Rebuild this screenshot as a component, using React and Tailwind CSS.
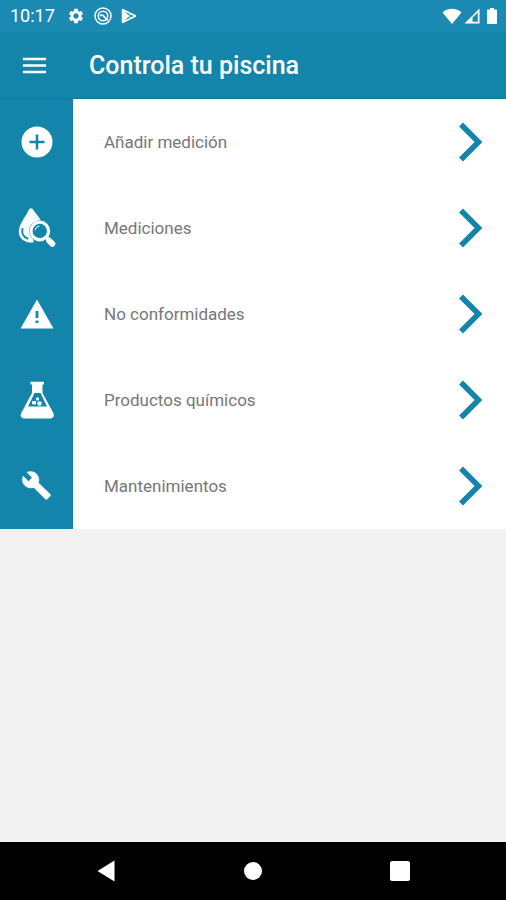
import { MdSettings, MdMenu } from 'react-icons/md';

const AddIcon = () => (
    <svg viewBox="0 0 32 32" className="w-8 h-8">
        <circle cx="16" cy="16" r="15.500" fill="white" />
        <path d="M16 8.500v15M8.500 16h15" stroke="#1485aa" strokeWidth="2.500" />
    </svg>
);

const DropSearchIcon = () => (
    <svg viewBox="0 0 38 40" className="w-[38px] h-10" fill="none">
        <path d="M13 .3c-1 0-1.800.7-2.500 2C7.500 9 .8 16.500.8 24c0 5.500 5 10 11.200 10.500h3.500v-3c-2.800-2-4.300-5-4.300-8.500 0-5.700 4.100-10.300 11.500-10.800-1.800-3.300-5.500-7.200-7.200-9.900-.7-1.200-1.500-2-2.500-2z" fill="white" />
        <path d="M4.500 21c-1 4 .5 8 5 9.500" stroke="#1485aa" strokeWidth="2" strokeLinecap="round" />
        <circle cx="21.800" cy="23" r="8.800" stroke="white" strokeWidth="3.200" />
        <path d="M17 22.500a5 5 0 0 1 4.500-4.500" stroke="white" strokeWidth="1" />
        <path d="M28 29l3 3" stroke="white" strokeWidth="3.500" />
        <path d="M31 32.500l3.300 3.300" stroke="white" strokeWidth="6" strokeLinecap="round" />
    </svg>
);

const WarningIcon = () => (
    <svg viewBox="0 0 34 30" className="w-[34px] h-[30px]">
        <path d="M17 .5L33.500 29.500H.5z" fill="white" />
        <path d="M17 12v7M17 21.500v2.500" stroke="#1485aa" strokeWidth="2.800" />
    </svg>
);

const FlaskIcon = () => (
    <svg viewBox="0 0 36 38" className="w-9 h-[38px]">
        <path d="M11.500.8h13.500v2.700h-1.500v8.500l10.800 20c1.600 3-.2 5.500-3.300 5.500H5.500c-3.200 0-4.800-2.600-3.200-5.500L13 12V3.500h-1.500z" fill="white" />
        <path d="M15.500 12h6l6.500 13.500H9z" fill="#1485aa" />
        <rect x="13" y="20" width="4" height="3.500" rx="1" fill="white" />
        <rect x="17" y="16.500" width="3" height="3" rx="1" fill="white" />
        <rect x="18.500" y="20.500" width="4" height="4" rx="1" fill="white" />
    </svg>
);

const WrenchIcon = () => (
    <svg viewBox="0 0 30 30" className="w-[30px] h-[30px]">
        <path d="M28 23.300L16.300 11.800c1.200-3 .5-6.500-1.900-8.900C11.800.4 8 0 5 1.400l5.200 5.200-3.700 3.800L1.200 5.200c-1.500 3-.9 6.800 1.700 9.300 2.400 2.400 5.900 3 8.900 1.900L23.400 28c.6.6 1.400.6 1.900 0l2.700-2.800c.6-.5.6-1.400 0-1.900z" fill="white" stroke="white" strokeWidth=".6" />
    </svg>
);

const ChevronIcon = () => (
    <svg viewBox="0 0 25 40" className="w-[25px] h-10" fill="none">
        <path d="M3 2.500L20.500 20 3 37.500" stroke="#1485aa" strokeWidth="5.500" />
    </svg>
);

const menuItems = [
    { label: 'Añadir medición', icon: <AddIcon /> },
    { label: 'Mediciones', icon: <DropSearchIcon /> },
    { label: 'No conformidades', icon: <WarningIcon /> },
    { label: 'Productos químicos', icon: <FlaskIcon /> },
    { label: 'Mantenimientos', icon: <WrenchIcon /> },
];

const StatusBar = () => (
    <div className="h-8 flex items-center justify-between pl-[10px] pr-2 bg-[#1a8ab2] text-white">
        <div className="flex items-center gap-[9px]">
            <span className="text-lg mr-[3px]">10:17</span>
            <MdSettings size={18} />
            <svg viewBox="0 0 18 18" className="w-[18px] h-[18px]" fill="none" stroke="white">
                <circle cx="9" cy="9" r="8" strokeWidth="1.500" />
                <circle cx="9" cy="9" r="4.700" strokeWidth="1.600" />
                <path d="M6 8.500c2.500-1 3.500 0 4.500 1.500l3.500 3.500" strokeWidth="1.700" />
            </svg>
            <svg viewBox="0 0 16 16" className="w-4 h-4" fill="none" stroke="white">
                <path d="M1.500 1.500L14.500 8 1.500 14.500z" strokeWidth="1.500" strokeLinejoin="round" />
                <path d="M1.500 1.500L7.500 8l-6 6.500z" fill="white" />
                <path d="M7 8l4-2.500M7 8l4 2.500" strokeWidth=".8" />
            </svg>
        </div>
        <div className="flex items-center gap-[2px]">
            <svg viewBox="0 0 20 16" className="w-5 h-4">
                <path d="M10 16L.5 4.500C3 2 6.300.8 10 .8s7 1.200 9.500 3.700z" fill="white" />
            </svg>
            <svg viewBox="0 0 16 16" className="w-4 h-4">
                <path d="M15.500.5v15H.5zM13.800 4.500L8.500 9.800v4h5.300z" fill="white" fillRule="evenodd" />
            </svg>
            <svg viewBox="0 0 12 18" className="w-3 h-[18px] ml-1">
                <path d="M4 1h4v1.500h2q1 0 1 1V16q0 1-1 1H2q-1 0-1-1V3.500q0-1 1-1h2z" fill="white" />
            </svg>
        </div>
    </div>
);

const Header = () => (
    <header className="h-[67px] flex items-center gap-[39px] pl-[19px] bg-[#1485aa] border-b border-[#0f779a] text-white">
        <button type="button" aria-label="Menú">
            <MdMenu size={31} />
        </button>
        <h1 className="pt-[2px] text-[25px] font-medium">Controla tu piscina</h1>
    </header>
);

const NavigationBar = () => (
    <nav className="h-[58px] grid grid-cols-3 px-8 bg-black">
        <button type="button" aria-label="Atrás" className="flex items-center justify-center">
            <svg viewBox="0 0 18 22" className="w-[18px] h-[22px]">
                <path d="M17.500.5v21L.5 11z" fill="white" />
            </svg>
        </button>
        <button type="button" aria-label="Inicio" className="flex items-center justify-center">
            <span className="w-[18px] h-[18px] rounded-full bg-white" />
        </button>
        <button type="button" aria-label="Recientes" className="flex items-center justify-center">
            <span className="w-5 h-5 rounded-xs bg-white" />
        </button>
    </nav>
);

const App = () => {
    return (
        <div className="min-h-screen flex flex-col bg-[#f2f2f2] font-[Roboto,sans-serif]">
            <StatusBar />
            <Header />
            <main className="flex-1">
                <ul className="bg-white">
                    {menuItems.map((item) => (
                        <li key={item.label}>
                            <button type="button" className="w-full h-[86px] flex items-center pr-[23px] text-left">
                                <span className="w-[73px] h-full flex items-center justify-center bg-[#1485aa] text-white">
                                    {item.icon}
                                </span>
                                <span className="flex-1 pt-[2px] pl-[31px] text-[17px] text-[#777777]">{item.label}</span>
                                <ChevronIcon />
                            </button>
                        </li>
                    ))}
                </ul>
            </main>
            <NavigationBar />
        </div>
    );
};

export default App;
